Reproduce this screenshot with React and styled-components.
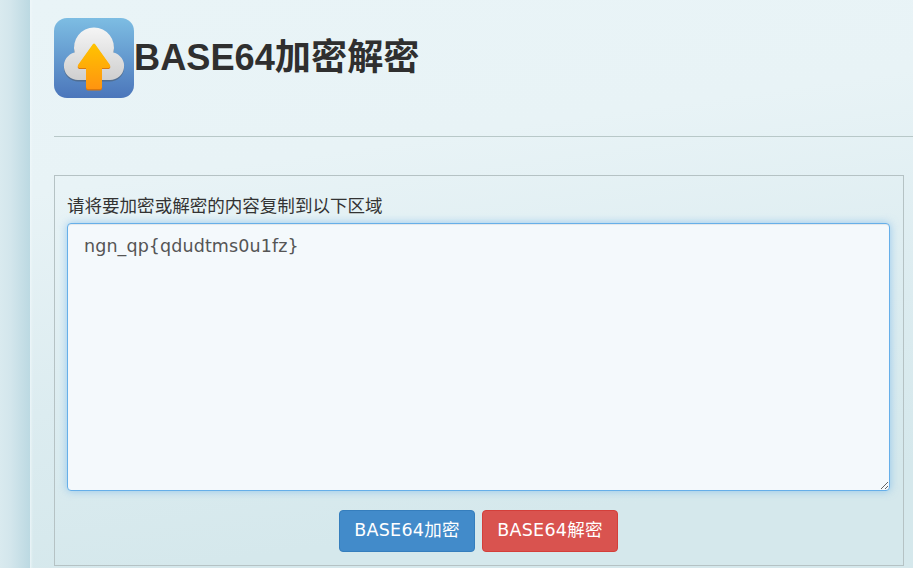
import React from "react";
import styled, { createGlobalStyle } from "styled-components";

const Global = createGlobalStyle`
  html, body { margin: 0; padding: 0; height: 100%; overflow: hidden; }
  #root { height: 100%; }
  * { box-sizing: border-box; }
`;

const Page = styled.div`
  display: flex;
  height: 568px;
  font-family: "DejaVu Sans", "Noto Sans CJK SC", sans-serif;
  color: #333;
  background: #d5e8ee;
`;

const Gutter = styled.div`
  width: 30px;
  flex: none;
  background: linear-gradient(90deg, #d9eaef 0%, #d3e6ec 35%, #bcd9e2 100%);
`;

const Main = styled.main`
  flex: 1;
  min-width: 0;
  padding: 18px 9px 0 24px;
  background: linear-gradient(172deg, #e9f4f7 0%, #e8f3f6 28%, #dcecf0 60%, #d5e8ec 85%, #d5e8ec 100%);
  box-shadow: inset 3px 0 3px -2px #f0f8fa;
`;

const Header = styled.header`
  display: flex;
  align-items: center;
  height: 80px;
`;

const Title = styled.h1`
  margin: 0;
  font: bold 36.2px/1 "Liberation Sans", "Noto Sans CJK SC", sans-serif;
  color: #2f2f2f;
`;

const Rule = styled.hr`
  margin: 38px -9px 38px 0;
  border: 0;
  border-top: 1px solid #b8c8c8;
`;

const Panel = styled.section`
  height: 391px;
  padding: 19px 13px 0 12px;
  border: 1px solid #b5c2c4;
`;

const Label = styled.label`
  display: block;
  height: 28px;
  font-size: 17.55px;
  line-height: 20px;
  color: #333;
  font-family: "Noto Sans CJK SC", sans-serif;
`;

const TextArea = styled.textarea`
  display: block;
  width: 100%;
  height: 268px;
  padding: 10px 16px;
  border: 1px solid #66afe9;
  border-radius: 4px;
  outline: 0;
  background: #f4f9fc;
  color: #555;
  font: 17.5px/24px "DejaVu Sans", "Noto Sans CJK SC", sans-serif;
  letter-spacing: 0.1px;
  box-shadow: inset 0 1px 1px rgba(0, 0, 0, 0.075), 0 0 8px rgba(102, 175, 233, 0.6);
`;

const Actions = styled.div`
  display: flex;
  justify-content: center;
  gap: 7px;
  margin-top: 19px;
`;

const Button = styled.button`
  width: 136px;
  height: 42px;
  padding: 0;
  border: 1px solid ${(p) => (p.$danger ? "#d43f3a" : "#357ebd")};
  border-radius: 4px;
  background: ${(p) => (p.$danger ? "#d9534f" : "#428bca")};
  color: #fff;
  font: 17.5px/1 "DejaVu Sans", "Noto Sans CJK SC", sans-serif;
  letter-spacing: 0.25px;
`;

const CLOUD = "M24 62A14 14 0 0 1 20.6 34.4A20 20 0 1 1 59.4 34.4A14 14 0 0 1 56 62Z";

const CloudIcon = () => (
  <svg width="80" height="80" viewBox="0 0 80 80" aria-hidden="true">
    <defs>
      <linearGradient id="tile" x1="0" y1="0" x2="0" y2="1">
        <stop offset="0" stopColor="#7dbde3" />
        <stop offset="1" stopColor="#4b76bb" />
      </linearGradient>
      <linearGradient id="cloud" x1="0" y1="0" x2="0" y2="1">
        <stop offset="0" stopColor="#f5f5f5" />
        <stop offset="1" stopColor="#cfcfcf" />
      </linearGradient>
      <linearGradient id="arrow" x1="0" y1="0" x2="0" y2="1">
        <stop offset="0" stopColor="#ffc400" />
        <stop offset="1" stopColor="#ff9410" />
      </linearGradient>
    </defs>
    <rect width="80" height="80" rx="13" fill="url(#tile)" />
    <path d={CLOUD} fill="#4f5f70" opacity=".6" transform="translate(0 1.5)" />
    <path d={CLOUD} fill="url(#cloud)" />
    <path
      d="M32 51V70.5Q32 72.5 34 72.5H46Q48 72.5 48 70.5V51H55Q57 50 56 48L41 27Q40 26 39 27L24 48Q23 50 25 51Z"
      fill="#d9780f"
    />
    <path
      d="M32 50V69Q32 71 34 71H46Q48 71 48 69V50H55Q57 49 56 47L41 26Q40 25 39 26L24 47Q23 49 25 50Z"
      fill="url(#arrow)"
    />
  </svg>
);

export default function App() {
  return (
    <Page>
      <Global />
      <Gutter />
      <Main>
        <Header>
          <CloudIcon />
          <Title>BASE64加密解密</Title>
        </Header>
        <Rule />
        <Panel>
          <Label htmlFor="content">请将要加密或解密的内容复制到以下区域</Label>
          <TextArea id="content" defaultValue="ngn_qp{qdudtms0u1fz}" />
          <Actions>
            <Button>BASE64加密</Button>
            <Button $danger>BASE64解密</Button>
          </Actions>
        </Panel>
      </Main>
    </Page>
  );
}
